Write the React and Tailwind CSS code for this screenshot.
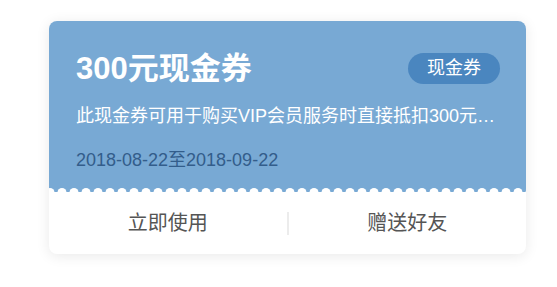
import React from "react";

const Scallops = () => (
  <svg className="absolute left-0 bottom-0 w-full h-[5px]" preserveAspectRatio="none">
    <defs>
      <pattern id="scallop" x="7" y="0" width="12" height="5" patternUnits="userSpaceOnUse">
        <circle cx="6" cy="5.5" r="4.5" fill="#ffffff" />
      </pattern>
    </defs>
    <rect width="100%" height="5" fill="url(#scallop)" />
  </svg>
);

const App = () => {
  return (
    <div
      className="w-[557px] h-[287px] bg-white pl-[49px] pt-[21px]"
      style={{ fontFamily: '"Liberation Sans", "Noto Sans CJK SC", sans-serif' }}
    >
      <div className="w-[477px] rounded-lg overflow-hidden bg-white shadow-[0_2px_14px_rgba(0,0,0,0.09)]">
        <div className="relative bg-[#78a9d4] pl-[27px] pr-[26px] pt-[32px] pb-[20px]">
          <div className="flex items-center justify-between h-[31px]">
            <div className="text-[31px] font-bold text-white leading-none">300元现金券</div>
            <div className="w-[92px] h-[31px] rounded-full bg-[#4a86bf] text-white text-[18px] flex items-center justify-center">
              现金券
            </div>
          </div>
          <p className="mt-[20px] text-[18px] leading-[24px] text-white whitespace-nowrap">
            此现金券可用于购买VIP会员服务时直接抵扣300元…
          </p>
          <p className="mt-[20px] text-[18px] leading-[24px] text-[#335d8b]">
            2018-08-22至2018-09-22
          </p>
          <Scallops />
        </div>
        <div className="flex items-center h-[62px] text-[20px] text-[#555555]">
          <button className="flex-1 text-center">立即使用</button>
          <div className="w-[2px] h-[23px] bg-[#ececec]" />
          <button className="flex-1 text-center">赠送好友</button>
        </div>
      </div>
    </div>
  );
};

export default App;
